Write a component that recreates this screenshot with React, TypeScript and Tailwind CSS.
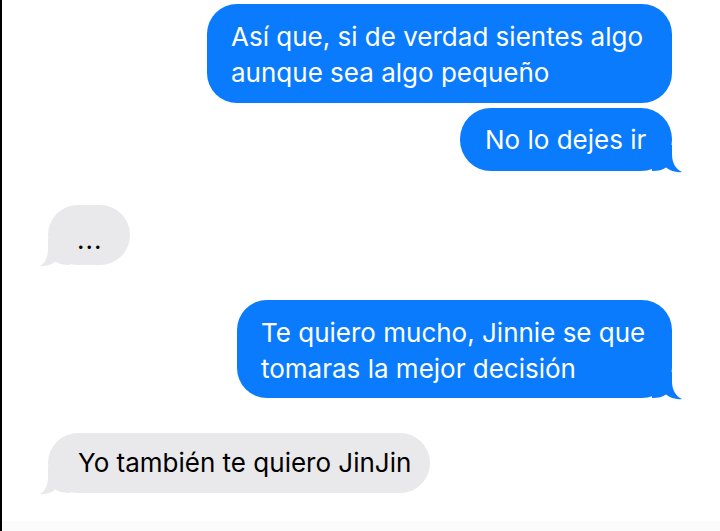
import React from "react";

const font = { fontFamily: "Inter, 'Noto Sans', 'Liberation Sans', sans-serif" };

function TailRight() {
  return (
    <svg
      className="absolute right-[-10px] bottom-[-2px] w-[30px] h-[28px]"
      viewBox="0 0 30 28"
    >
      <path
        d="M0 0 H20 V9 C20 18 23.5 24 30 27 C24.5 27.8 18.5 26 14 22.5 C11 25 6 26 0 26 Z"
        fill="#0a7bfd"
      />
    </svg>
  );
}

function TailLeft() {
  return (
    <svg
      className="absolute left-[-8px] bottom-[-2px] w-[30px] h-[28px]"
      viewBox="0 0 30 28"
    >
      <path
        d="M30 0 H8 V9 C8 18 5.5 24 0 27 C5 27.8 11 26 15.5 22.5 C18.5 25 24 26 30 26 Z"
        fill="#e9e9eb"
      />
    </svg>
  );
}

export default function App() {
  return (
    <div
      className="w-[720px] h-[531px] bg-white border-l-2 border-black flex flex-col overflow-hidden"
      style={font}
    >
      {/* bubble 1 */}
      <div className="self-end mr-[48px] mt-[4px] relative w-[465px] h-[99px] rounded-[30px] bg-[#0a7bfd] text-white text-[26px] leading-[36px] pl-[24px] pt-[3px] flex flex-col justify-center whitespace-nowrap">
        <span>Así que, si de verdad sientes algo</span>
        <span>aunque sea algo pequeño</span>
      </div>

      {/* bubble 2 */}
      <div className="self-end mr-[48px] mt-[5px] relative w-[212px] h-[63px] rounded-[31px] bg-[#0a7bfd] text-white text-[26px] leading-[36px] pl-[25px] flex flex-col justify-center whitespace-nowrap">
        <TailRight />
        <span className="relative">No lo dejes ir</span>
      </div>

      {/* bubble 3 */}
      <div className="self-start ml-[46px] mt-[34px] relative w-[82px] h-[60px] rounded-[30px] bg-[#e9e9eb] text-black text-[26px] leading-[36px] pl-[29px] pt-[10px] flex flex-col justify-center whitespace-nowrap">
        <TailLeft />
        <span className="relative tracking-[1px]">...</span>
      </div>

      {/* bubble 4 */}
      <div className="self-end mr-[48px] mt-[35px] relative w-[435px] h-[98px] rounded-[30px] bg-[#0a7bfd] text-white text-[26px] leading-[36px] pl-[24px] pt-[3px] flex flex-col justify-center whitespace-nowrap">
        <TailRight />
        <span className="relative">Te quiero mucho, Jinnie se que</span>
        <span className="relative">tomaras la mejor decisión</span>
      </div>

      {/* bubble 5 */}
      <div className="self-start ml-[46px] mt-[35px] relative w-[382px] h-[60px] rounded-[30px] bg-[#e9e9eb] text-black text-[26px] leading-[36px] pl-[30px] flex flex-col justify-center whitespace-nowrap">
        <TailLeft />
        <span className="relative">Yo también te quiero JinJin</span>
      </div>

      <div className="flex-1" />
      <div className="h-[10px] bg-[#fbfbfb]" />
    </div>
  );
}
